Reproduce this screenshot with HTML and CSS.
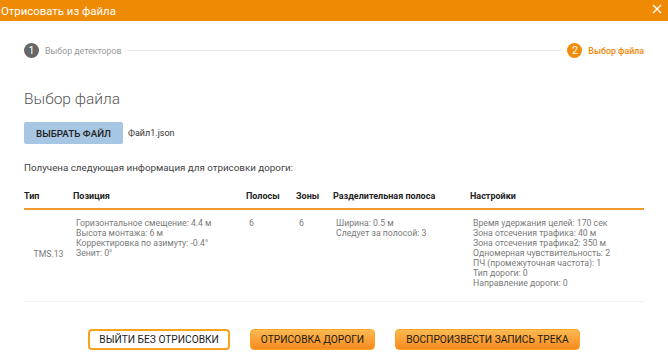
FILE: index.html
```html
<!DOCTYPE html>
<html lang="ru">
<head>
    <meta charset="UTF-8">
    <title>Отрисовать из файла</title>
    <link rel="stylesheet" href="styles.css">
</head>
<body>
    <div class="dialog">
        <header class="dialog-head">
            <span class="dialog-title">Отрисовать из файла</span>
            <svg class="dialog-close" width="10" height="10" viewBox="0 0 10 10">
                <path d="M1 1 L9 9 M9 1 L1 9" stroke="#fff" stroke-width="1.3" fill="none"/>
            </svg>
        </header>

        <div class="dialog-body">
            <div class="stepper">
                <div class="step done">
                    <span class="step-num">1</span>
                    <span class="step-label">Выбор детекторов</span>
                </div>
                <div class="step-line"></div>
                <div class="step active">
                    <span class="step-num">2</span>
                    <span class="step-label">Выбор файла</span>
                </div>
            </div>

            <h2 class="section-title">Выбор файла</h2>

            <div class="file-row">
                <button class="btn-file">ВЫБРАТЬ ФАЙЛ</button>
                <span class="file-name">Файл1.json</span>
            </div>

            <p class="info">Получена следующая информация для отрисовки дороги:</p>

            <table class="road-table">
                <thead>
                    <tr>
                        <th class="col-type">Тип</th>
                        <th class="col-pos">Позиция</th>
                        <th class="col-lanes">Полосы</th>
                        <th class="col-zones">Зоны</th>
                        <th class="col-div">Разделительная полоса</th>
                        <th class="col-set">Настройки</th>
                    </tr>
                </thead>
                <tbody>
                    <tr>
                        <td class="cell-type">TMS.13</td>
                        <td>Горизонтальное смещение: 4.4 м<br>Высота монтажа: 6 м<br>Корректировка по азимуту: -0.4°<br>Зенит: 0°</td>
                        <td>6</td>
                        <td>6</td>
                        <td>Ширина: 0.5 м<br>Следует за полосой: 3</td>
                        <td>Время удержания целей: 170 сек<br>Зона отсечения трафика: 40 м<br>Зона отсечения трафика2: 350 м<br>Одномерная чувствительность: 2<br>ПЧ (промежуточная частота): 1<br>Тип дороги: 0<br>Направление дороги: 0</td>
                    </tr>
                </tbody>
            </table>

            <div class="actions">
                <button class="btn btn-outline">ВЫЙТИ БЕЗ ОТРИСОВКИ</button>
                <button class="btn btn-orange">ОТРИСОВКА ДОРОГИ</button>
                <button class="btn btn-orange">ВОСПРОИЗВЕСТИ ЗАПИСЬ ТРЕКА</button>
            </div>
        </div>
    </div>
</body>
</html>
```

FILE: styles.css
```css
body {
    margin: 0;
    background: #fff;
    font-family: Roboto, "Liberation Sans", sans-serif;
}

.dialog {
    width: 668px;
}

.dialog-head {
    display: flex;
    justify-content: space-between;
    align-items: center;
    height: 21px;
    background-color: #ef8a05;
    color: #fff;
}

.dialog-title {
    font-size: 11.4px;
    padding-left: 1px;
}

.dialog-close {
    margin-right: 6px;
    margin-bottom: 4px;
}

.dialog-body {
    padding: 0 24px;
}

/* stepper */
.stepper {
    display: flex;
    align-items: center;
    margin-top: 22px;
    height: 15px;
}

.step {
    display: flex;
    align-items: center;
    gap: 6px;
    font-size: 8.8px;
}

.step-num {
    display: inline-flex;
    align-items: center;
    justify-content: center;
    width: 15px;
    height: 15px;
    border-radius: 50%;
    color: #fff;
    font-size: 10.5px;
}

.step.done .step-num {
    background-color: #666;
}

.step.done .step-label {
    color: #999;
}

.step.active .step-num {
    background-color: #f08c0a;
}

.step.active .step-label {
    color: #ef8a05;
    font-weight: 500;
}

.step-line {
    flex-grow: 1;
    height: 1px;
    background-color: #e6e6e6;
    margin: 0 5px 0 5px;
}

.section-title {
    margin: 31px 0 0;
    font-size: 15.5px;
    line-height: 20px;
    font-weight: 300;
    color: #555;
}

.file-row {
    display: flex;
    align-items: center;
    gap: 5px;
    margin-top: 13px;
}

.btn-file {
    height: 22px;
    width: 99px;
    border: none;
    border-radius: 2px;
    background-color: #a7c6e3;
    color: #222;
    font-family: inherit;
    font-size: 9.8px;
    font-weight: 500;
    padding: 0;
}

.file-name {
    font-size: 9px;
    color: #333;
}

.info {
    margin: 17px 0 0;
    font-size: 9.8px;
    line-height: 14px;
    color: #444;
}

/* table */
.road-table {
    width: 620px;
    margin-top: 7px;
    border-collapse: collapse;
    table-layout: fixed;
}

.road-table th {
    text-align: left;
    font-size: 9px;
    font-weight: 700;
    color: #222;
    line-height: 12px;
    padding: 8px 0 6px;
    border-bottom: 2px solid #f29a2e;
}

.road-table td {
    vertical-align: top;
    font-size: 8.7px;
    color: #7a7a7a;
    line-height: 10px;
    padding: 8px 0 13px 3px;
    border-bottom: 1px solid #f2f2f2;
}

.road-table td.cell-type {
    vertical-align: middle;
    text-align: center;
    padding-left: 0;
    padding-top: 10px;
}

.col-type { width: 49px; }
.col-pos { width: 173px; }
.col-lanes { width: 50px; }
.col-zones { width: 37px; }
.col-div { width: 137px; }
.col-set { width: 174px; }

/* bottom buttons */
.actions {
    display: flex;
    justify-content: center;
    gap: 20px;
    margin-top: 27px;
}

.btn {
    height: 21px;
    padding: 0 9px;
    border-radius: 4px;
    font-family: inherit;
    font-size: 10.2px;
    font-weight: 400;
    color: #1a1a1a;
}

.btn-outline {
    background: #fff;
    border: 2px solid #f6a31e;
}

.btn-orange {
    background: linear-gradient(#fdba52, #f68a1e);
    border: 1px solid #f7a424;
    padding: 0 10px;
}
```
